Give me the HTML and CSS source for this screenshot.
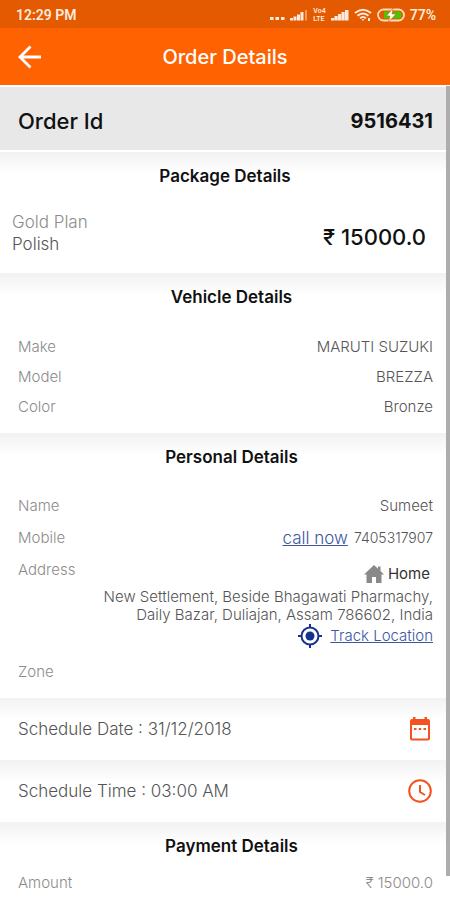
FILE: index.html
```html
<!DOCTYPE html>
<html lang="en">
<head>
<meta charset="utf-8">
<meta name="viewport" content="width=device-width, initial-scale=1">
<title>Order Details</title>
<link rel="stylesheet" href="styles.css">
</head>
<body>
<div class="status">
  <span>12:29 PM</span>
  <div class="status-icons">
    <svg width="15" height="14" viewBox="0 0 15 14" fill="currentColor"><path d="M0 9h3.500v3H0zM5.500 9H9v3H5.500zM11 9h3.500v3H11z"/></svg>
    <svg width="18" height="14" viewBox="0 0 18 14" fill="currentColor"><path d="M0 10h3v2.500H0zM3.500 8.500h3v4h-3zM7 6.500h3v6H7zM10.500 4h3v8.500h-3z"/><path d="M15 2h2v10.500h-2z" opacity=".45"/></svg>
    <span class="volte"><span>Vo4</span><span>LTE</span></span>
    <svg width="18" height="14" viewBox="0 0 18 14" fill="currentColor"><path d="M0 10h3.200v2.500H0zM3.500 8h3.200v4.500H3.500zM7 6h3.200v6.500H7zM10.500 4h3.200v8.500h-3.200zM14 2h3.500v10.500H14z"/></svg>
    <svg width="18" height="14" viewBox="0 0 18 14" fill="none" stroke="currentColor" stroke-width="2"><path d="M1 5q8-6.500 16 0M3.500 7.800q5.500-4.500 11 0M6 10.300q3-2.500 6 0"/><path d="M7.500 11.200h3L9 13z" fill="currentColor" stroke="none"/><path d="M15 10v3" stroke-width="2"/></svg>
    <svg width="28" height="14" viewBox="0 0 28 14"><rect x="1" y="1.500" width="26" height="11" rx="5.500" fill="none" stroke="#ffd9b8" stroke-width="1.800"/><path d="M7 3.500h14q3.500 0 3.500 3.500T21 10.500H7z" fill="#46c800"/><path d="M16 0L9.500 8H13l-1.500 6L19 6h-4z" fill="#fff" stroke="#e35a00" stroke-width=".6"/></svg>
    <span>77%</span>
  </div>
</div>
<header class="appbar">
  <button class="back" type="button" aria-label="Back"><svg width="24" height="24" viewBox="0 0 24 24" fill="none" stroke="currentColor" stroke-width="2.800"><path d="M12.500 1.500L2 12l10.500 10.500M2 12h21"/></svg></button>
  <h1>Order Details</h1>
</header>
<main class="content">
  <div class="order"><span>Order Id</span><strong>9516431</strong></div>

  <section class="card package">
    <h2>Package Details</h2>
    <div class="plan">
      <div class="plan-name"><span class="muted">Gold Plan</span><span>Polish</span></div>
      <span class="price">₹ 15000.0</span>
    </div>
  </section>

  <section class="card">
    <h2>Vehicle Details</h2>
    <dl>
      <div class="row"><dt>Make</dt><dd>MARUTI SUZUKI</dd></div>
      <div class="row"><dt>Model</dt><dd>BREZZA</dd></div>
      <div class="row"><dt>Color</dt><dd>Bronze</dd></div>
    </dl>
  </section>

  <section class="card personal">
    <h2>Personal Details</h2>
    <dl>
      <div class="row"><dt>Name</dt><dd>Sumeet</dd></div>
      <div class="row"><dt>Mobile</dt><dd class="phone"><a class="call" href="#call">call now</a><span>7405317907</span></dd></div>
      <div class="row address">
        <dt>Address</dt>
        <dd>
          <span class="place"><svg width="20" height="20" viewBox="0 0 20 20" fill="#898989"><path d="M10 1L0 10.500h2.500V19H8v-6h4v6h5.500v-8.500H20L16.500 7V2.500H14v2.200z"/></svg>Home</span>
          <span class="lines">New Settlement, Beside Bhagawati Pharmachy,<br>Daily Bazar, Duliajan, Assam 786602, India</span>
          <a class="track" href="#track"><svg width="24" height="24" viewBox="0 0 24 24" fill="none" stroke="#15338c" stroke-width="2"><circle cx="12" cy="12" r="8.500"/><circle cx="12" cy="12" r="4.500" fill="#15338c" stroke="none"/><path d="M12 0v4M12 20v4M0 12h4M20 12h4"/></svg><span>Track Location</span></a>
        </dd>
      </div>
      <div class="row"><dt>Zone</dt><dd></dd></div>
    </dl>
  </section>

  <section class="card schedule">
    <span>Schedule Date : 31/12/2018</span>
    <button type="button" aria-label="Pick date"><svg width="24" height="24" viewBox="0 0 24 24"><path fill="#f4511e" fill-rule="evenodd" d="M5 0h2.500v2h9V0H19v2h1q2 0 2 2v17.500q0 2-2 2H4q-2 0-2-2V4q0-2 2-2h1zM4 8v13.500h16V8z"/><path fill="#f4511e" d="M6 11h2.500v2H6zM10.700 11h2.500v2h-2.500zM15.500 11H18v2h-2.500z"/></svg></button>
  </section>
  <section class="card schedule">
    <span>Schedule Time : 03:00 AM</span>
    <button type="button" aria-label="Pick time"><svg width="24" height="24" viewBox="0 0 24 24" fill="none" stroke="#f4511e" stroke-width="2"><circle cx="12" cy="12" r="10.800"/><path d="M12 6v7l5 3"/></svg></button>
  </section>

  <section class="card payment">
    <h2>Payment Details</h2>
    <dl>
      <div class="row"><dt>Amount</dt><dd class="muted">₹ 15000.0</dd></div>
    </dl>
  </section>
  <div class="scrollbar"></div>
</main>
</body>
</html>
```
FILE: styles.css
```css
* { box-sizing: border-box; }
body {
  margin: 0;
  background: #fff;
  color: #555;
  font-family: Inter, "Noto Sans", sans-serif;
  font-size: 15px;
  font-weight: 300;
}
h1, h2, dl, dd { margin: 0; }
button { display: flex; padding: 0; border: 0; background: none; color: inherit; }
svg { display: block; flex: none; }

.status {
  display: flex;
  align-items: center;
  justify-content: space-between;
  height: 28px;
  padding: 2px 14px 0 16px;
  background: #e35a00;
  color: #ffeadb;
  font-family: Roboto, sans-serif;
  font-size: 14px;
  font-weight: 600;
}
.status-icons { display: flex; align-items: center; gap: 5px; }
.volte { display: flex; flex-direction: column; font-size: 7px; line-height: 8px; }

.appbar {
  display: grid;
  grid-template-columns: 24px 1fr 24px;
  align-items: center;
  height: 57px;
  padding: 0 18px;
  background: #ff6200;
  color: #fff;
}
.appbar h1 { font-size: 20px; font-weight: 500; text-align: center; }

.content { position: relative; }
.scrollbar {
  position: absolute;
  top: 1px;
  right: 0;
  bottom: 24px;
  width: 4px;
  background: #adadad;
}

.order {
  display: flex;
  align-items: center;
  justify-content: space-between;
  height: 67px;
  padding: 4px 17px 0 18px;
  border: solid #fff;
  border-width: 2px 0;
  background: #e8e8e8;
  color: #111;
  font-size: 22px;
  font-weight: 500;
}
.order strong { font-size: 20px; font-weight: 700; }

.card {
  padding: 14px 17px 11px 18px;
  background: linear-gradient(#f2f2f2, #fff 22px);
}
.card h2 {
  padding-left: 12px;
  color: #111;
  font-size: 17px;
  font-weight: 600;
  line-height: 20px;
  text-align: center;
}
.card dl { padding-top: 25px; }
.package { padding: 14px 24px 18px 12px; }
.plan { display: flex; align-items: center; justify-content: space-between; padding-top: 25px; }
.plan-name { display: flex; flex-direction: column; font-size: 17px; line-height: 22px; }
.price { padding-top: 8px; color: #111; font-size: 22px; font-weight: 500; }
.muted, dt { color: #8c8c8c; }

.row { display: flex; justify-content: space-between; line-height: 30px; }
.personal { padding-bottom: 10px; }
.personal .row { line-height: 32px; }
.card.personal dl { padding-top: 23px; }
.card.payment dl { padding-top: 12px; }
.payment { padding-bottom: 2px; }

a { color: #3c56a0; }
.phone { display: flex; align-items: center; gap: 6px; font-size: 14px; }
.call { font-size: 17px; }
.address dd {
  display: flex;
  flex-direction: column;
  align-items: flex-end;
  padding: 8px 0;
  line-height: 24px;
}
.place { display: flex; align-items: center; gap: 4px; padding-right: 3px; color: #333; font-weight: 400; }
.lines { padding: 2px 0 0; line-height: 18px; text-align: right; }
.track { display: flex; align-items: center; gap: 8px; text-decoration: none; }
.track span { text-decoration: underline; }

.schedule {
  display: flex;
  align-items: center;
  justify-content: space-between;
  height: 62px;
  padding: 0 18px;
  font-size: 17px;
}
```
